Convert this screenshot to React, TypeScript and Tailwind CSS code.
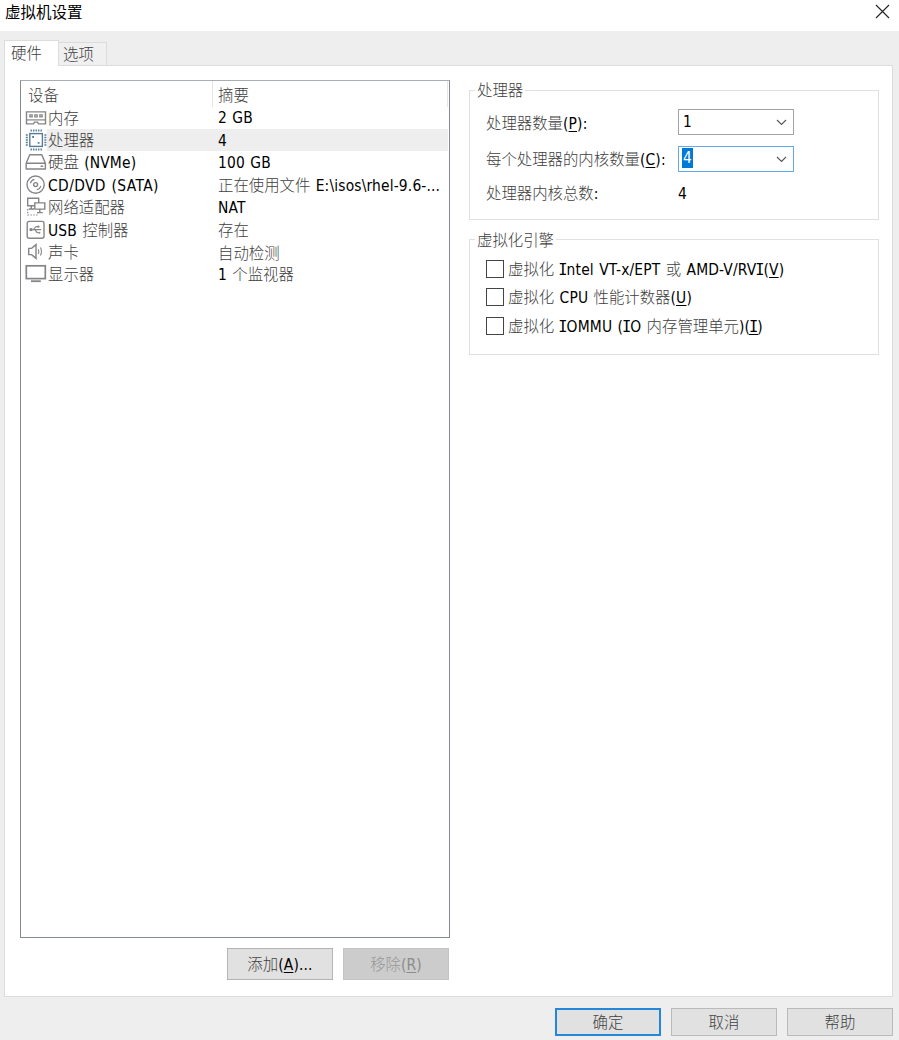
import type { ReactNode } from "react";
import clsx from "clsx";

const devices = [
  { name: "内存", summary: "2 GB", icon: <MemoryIcon /> },
  { name: "处理器", summary: "4", icon: <CpuIcon />, selected: true },
  { name: "硬盘 (NVMe)", summary: "100 GB", icon: <DiskIcon /> },
  { name: "CD/DVD (SATA)", summary: "正在使用文件 E:\\isos\\rhel-9.6-...", icon: <DiscIcon />, wide: true },
  { name: "网络适配器", summary: "NAT", icon: <NetworkIcon /> },
  { name: "USB 控制器", summary: "存在", icon: <UsbIcon /> },
  { name: "声卡", summary: "自动检测", icon: <SoundIcon /> },
  { name: "显示器", summary: "1 个监视器", icon: <DisplayIcon /> },
];

// Capital I gets serifs, as in Tahoma
function Latin({ text }: { text: string }) {
  return text.split(/(I)/).map((part, i) =>
    part === "I" ? (
      <span key={i} className="-mx-[1.2px] font-['DejaVu_Sans_Mono',monospace]">I</span>
    ) : (
      part
    )
  );
}

type LabelProps = {
  text: string;
  hotkey?: string;
  suffix?: string;
  muted?: boolean;
  wide?: boolean;
};

// Chinese runs are drawn lighter and thinner than the latin ones
function Label({ text, hotkey, suffix = "", muted, wide }: LabelProps) {
  const latin = clsx(
    "font-['DejaVu_Sans_Condensed','DejaVu_Sans',sans-serif] text-[15.4px] [font-stretch:condensed] [word-spacing:0.8px]",
    wide ? "tracking-[0.4px]" : "tracking-[0.16px]",
    muted ? "text-[#8b8b8b]" : "text-black"
  );
  return (
    <span className="whitespace-pre leading-5">
      {text.split(/([\u4e00-\u9fff]+)/).filter(Boolean).map((run, i) =>
        /[\u4e00-\u9fff]/.test(run) ? (
          <span
            key={i}
            className={clsx(
              "font-['Noto_Sans_CJK_SC',sans-serif] font-light text-[15.4px]",
              muted ? "text-[#979797]" : "text-[#404040]"
            )}
          >
            {run}
          </span>
        ) : (
          <span key={i} className={latin}><Latin text={run} /></span>
        )
      )}
      {(hotkey || suffix) && (
        <span className={latin}>
          {hotkey && <>(<span className="underline underline-offset-2 decoration-1"><Latin text={hotkey} /></span>)</>}
          {suffix}
        </span>
      )}
    </span>
  );
}

function Icon({ children }: { children: ReactNode }) {
  return (
    <svg width="22" height="22" viewBox="0 0 22 22" fill="none" stroke="#858585" strokeWidth="1.4" className="shrink-0">
      {children}
    </svg>
  );
}

function MemoryIcon() {
  return (
    <Icon>
      <path d="M1.5 4.9h19v12h-7l-1-1.8h-3l-1 1.8h-7z" />
      <path d="M2 12.9h18.5" strokeWidth="1.2" />
      <path d="M4.8 7.9h2.4v2H4.8zM9.8 7.9h2.4v2H9.8zM14.8 7.9h2.4v2h-2.4z" strokeWidth="1.2" />
    </Icon>
  );
}

function CpuIcon() {
  return (
    <Icon>
      <g stroke="#577c98">
        <rect x="4.8" y="4.6" width="12.6" height="12.8" strokeWidth="1.4" />
        <path d="M5.5 1.6h12M5.5 20.4h12" strokeWidth="2" strokeDasharray="1.4 1.1" />
        <path d="M1.8 5.3v12M20.4 5.3v12" strokeWidth="2" strokeDasharray="1.4 1.1" />
        <path d="M7.2 8h1.8M12.7 13.8h1.8" strokeWidth="1.8" />
      </g>
    </Icon>
  );
}

function DiskIcon() {
  return (
    <Icon>
      <path d="M4.7 3.7h12.1l3.6 8.6v5.7H1.2v-5.7zM1.2 12.3h19.2" strokeLinejoin="round" />
      <path d="M15.5 15.2h2.8" />
    </Icon>
  );
}

function DiscIcon() {
  return (
    <Icon>
      <circle cx="10.6" cy="10.6" r="8.6" />
      <circle cx="10.6" cy="10.6" r="2" />
      <path d="M5.4 9.4a5.4 5.4 0 0 1 4-4M15.8 11.8a5.4 5.4 0 0 1-4 4" strokeWidth="1.1" />
    </Icon>
  );
}

function NetworkIcon() {
  return (
    <Icon>
      <path d="M9.8 9.7H2.7V2.3h11v4.6M6.3 9.7v3M3.8 13h5.2" />
      <path d="M9.8 6.9h10v6.2h-10zM14.8 13.1v3.2M12 16.6h5.8" />
      <path d="M2.7 13v6h11" strokeDasharray="1.4 1.5" strokeWidth="1.2" />
    </Icon>
  );
}

function UsbIcon() {
  return (
    <Icon>
      <rect x="2.2" y="2.4" width="16.8" height="16.8" rx="2" />
      <path d="M6 10.6h10M8 10.6c1.6 0 1.6-3 3.4-3h1.8M9.4 10.6c1.6 0 1.6 3.2 3.4 3.2h1.6" strokeWidth="1.1" />
      <circle cx="6" cy="10.6" r="1" fill="#858585" />
      <circle cx="13.4" cy="7.6" r=".5" fill="#858585" />
      <path d="M14.2 13.4h.8v.8h-.8z" strokeWidth="1" />
    </Icon>
  );
}

function SoundIcon() {
  return (
    <Icon>
      <path d="M3.7 7.4h2.9l4.4-3.8v13.8l-4.4-3.8H3.7z" />
      <path d="M13.2 8.2q1.2 2.3 0 4.7M15.4 6.6q2.2 3.9 0 7.8" strokeWidth="1.1" />
    </Icon>
  );
}

function DisplayIcon() {
  return (
    <Icon>
      <rect x="1.3" y="2.8" width="19" height="12.8" strokeWidth="1.7" />
      <path d="M6 18.2h9.8" strokeWidth="1.8" />
    </Icon>
  );
}

function Combo({ value, focused }: { value: string; focused?: boolean }) {
  return (
    <div
      className={clsx(
        "flex h-[26px] w-[116px] items-center justify-between border pr-1.5 pl-[3px]",
        focused ? "border-[#62aaea]" : "border-[#a2a2a2]"
      )}
    >
      <span
        className={clsx(
          "flex h-5 items-center px-px pt-px font-['DejaVu_Sans_Condensed','DejaVu_Sans',sans-serif] text-[15.4px] [font-stretch:condensed]",
          focused ? "-mt-0.5 bg-[#0078d7] text-white" : "text-black"
        )}
      >
        {value}
      </span>
      <svg width="11" height="7" viewBox="0 0 11 7" fill="none" stroke="#555" strokeWidth="1.1">
        <path d="M1 1l4.5 4.5L10 1" />
      </svg>
    </div>
  );
}

function Check({ children }: { children: ReactNode }) {
  return (
    <label className="flex h-[28.5px] items-center gap-1">
      <span className="size-[18px] border border-[#444] bg-white" />
      {children}
    </label>
  );
}

function Button({ children, className }: { children: ReactNode; className: string }) {
  return <button className={clsx("flex items-center justify-center pb-px", className)}>{children}</button>;
}

export default function App() {
  return (
    <div className="flex h-[1040px] w-[899px] flex-col overflow-hidden bg-[#eeeeee]">
      <header className="flex h-[31px] items-start justify-between bg-white pr-[9px] pl-[5px]">
        <h1 className="font-['Noto_Sans_CJK_SC',sans-serif] text-[15.5px] leading-[22px] text-black">虚拟机设置</h1>
        <svg width="15" height="15" viewBox="0 0 15 15" stroke="#222" strokeWidth="1.1" className="mt-1">
          <path d="M1 1l13 13M14 1L1 14" />
        </svg>
      </header>

      <nav className="flex h-[34px] items-end pl-1">
        <div className="z-10 -mb-px flex h-[26px] w-[55px] items-center border border-b-0 border-[#dcdcdc] bg-white pb-0.5 pl-1.5">
          <Label text="硬件" />
        </div>
        <div className="flex h-[23px] w-12 items-center border border-b-0 border-l-0 border-[#dcdcdc] bg-[#f0f0f0] pb-px pl-1">
          <Label text="选项" />
        </div>
      </nav>

      <main className="ml-1 flex h-[932px] w-[889px] gap-[19px] border border-[#dcdcdc] bg-white pt-3.5 pl-[15px]">
        <section className="w-[430px]">
          <div className="h-[858px] border border-[#858a94] border-t-[#a9aeb6] bg-white">
            <div className="flex h-[25.5px] items-center">
              <div className="flex h-full w-[192px] items-center border-r border-[#e5e5e5] pt-0.5 pl-[7px]">
                <Label text="设备" />
              </div>
              <div className="mr-px flex h-full flex-1 items-center border-r border-[#e5e5e5] pt-0.5 pl-[5px]">
                <Label text="摘要" />
              </div>
            </div>
            {devices.map((d) => (
              <div key={d.name} className="flex h-[22.4px] items-center pr-px pl-1">
                {d.icon}
                <div className={clsx("flex h-full flex-1 items-center pl-px", d.selected && "bg-[#eeeeee]")}>
                  <div className="w-[170px]">
                    <Label text={d.name} wide={d.wide} />
                  </div>
                  <Label text={d.summary} />
                </div>
              </div>
            ))}
          </div>
          <div className="mt-2.5 flex justify-end gap-2.5 pr-px">
            <Button className="h-8 w-[106px] border border-[#b5b5b5] bg-[#e1e1e1]">
              <Label text="添加" hotkey="A" suffix="..." />
            </Button>
            <Button className="h-8 w-[106px] border border-[#c3c3c3] bg-[#cccccc]">
              <Label text="移除" hotkey="R" muted />
            </Button>
          </div>
        </section>

        <section className="w-[410px]">
          <fieldset className="h-[140px] border border-[#e0e0e0] pl-4">
            <legend className="-ml-[11px] flex h-5 items-center px-0.5 pb-0.5">
              <Label text="处理器" />
            </legend>
            <div className="flex h-[35px] items-end">
              <div className="w-[192px]">
                <Label text="处理器数量" hotkey="P" suffix=":" />
              </div>
              <Combo value="1" />
            </div>
            <div className="mt-[11px] flex items-center">
              <div className="w-[192px]">
                <Label text="每个处理器的内核数量" hotkey="C" suffix=":" />
              </div>
              <Combo value="4" focused />
            </div>
            <div className="mt-2 flex h-[26px] items-center">
              <div className="w-[192px]">
                <Label text="处理器内核总数:" />
              </div>
              <Label text="4" />
            </div>
          </fieldset>

          <fieldset className="mt-[9px] h-[126px] border border-[#e0e0e0] pl-4">
            <legend className="-ml-[11px] flex h-5 items-center px-0.5">
              <Label text="虚拟化引擎" />
            </legend>
            <div className="pt-[5.5px]">
              <Check><Label text="虚拟化 Intel VT-x/EPT 或 AMD-V/RVI" hotkey="V" /></Check>
              <Check><Label text="虚拟化 CPU 性能计数器" hotkey="U" /></Check>
              <Check><Label text="虚拟化 IOMMU (IO 内存管理单元)" hotkey="I" /></Check>
            </div>
          </fieldset>
        </section>
      </main>

      <footer className="mt-[11px] flex justify-end gap-2.5 pr-1.5">
        <Button className="h-7 w-[106px] border-2 border-[#2587d9] bg-[#e1e1e1]">
          <Label text="确定" />
        </Button>
        <Button className="h-7 w-[106px] border border-[#bababa] bg-[#e1e1e1]">
          <Label text="取消" />
        </Button>
        <Button className="h-7 w-[106px] border border-[#bababa] bg-[#e1e1e1]">
          <Label text="帮助" />
        </Button>
      </footer>
    </div>
  );
}
